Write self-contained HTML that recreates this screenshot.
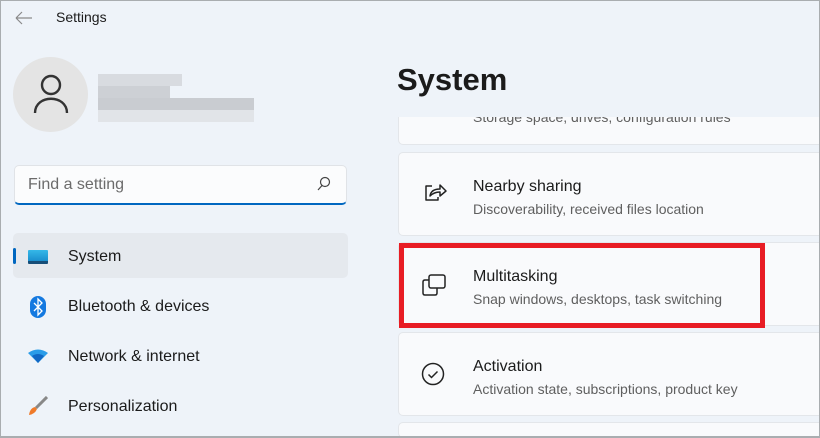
<!DOCTYPE html>
<html><head><style>
*{margin:0;padding:0;box-sizing:border-box}
html,body{width:820px;height:438px;overflow:hidden}
body{background:#eef3f9;font-family:"Liberation Sans",sans-serif;color:#1b1b1b;position:relative}
.frame{position:absolute;left:0;top:0;width:820px;height:438px;border:1px solid #a9adb0;border-bottom-width:2px;pointer-events:none;z-index:10}
.abs{position:absolute}
.card{position:absolute;left:398px;width:430px;height:84px;background:#f9fafc;border:1px solid #e3e6ea;border-radius:5px}
.t{position:absolute;left:74px;top:25px;font-size:16px;color:#1b1b1b}
.s{position:absolute;left:74px;top:48px;font-size:14px;color:#5f5f5f}
.nav{position:absolute;left:68px;font-size:16px;color:#1b1b1b}
</style></head><body>
<div class="frame"></div>
<svg class="abs" style="left:14px;top:10px" width="20" height="16"><path d="M2 8H18M2 8L8 2M2 8L8 14" stroke="#8a8a8a" stroke-width="1.2" fill="none"/></svg>
<div class="abs" style="left:56px;top:9px;font-size:14px">Settings</div>
<div class="abs" style="left:13px;top:57px;width:75px;height:75px;border-radius:50%;background:#e4e4e4"></div>
<svg class="abs" style="left:33px;top:74px" width="36" height="40"><circle cx="18" cy="11" r="9" stroke="#333" stroke-width="2.4" fill="none"/><path d="M2 39 C2 20 34 20 34 39" stroke="#333" stroke-width="2.4" fill="none"/></svg>
<div class="abs" style="left:98px;top:74px;width:84px;height:12px;background:#d8dbe0"></div>
<div class="abs" style="left:98px;top:86px;width:72px;height:12px;background:#cdd0d5"></div>
<div class="abs" style="left:98px;top:98px;width:156px;height:12px;background:#c9ccd1"></div>
<div class="abs" style="left:98px;top:110px;width:156px;height:12px;background:#e1e4e8"></div>
<div class="abs" style="left:14px;top:165px;width:333px;height:40px;background:#fbfcfd;border:1px solid #e0e3e7;border-bottom:2px solid #0067c0;border-radius:5px"></div>
<div class="abs" style="left:28px;top:176px;font-size:16px;color:#6b6b6b">Find a setting</div>
<svg class="abs" style="left:316px;top:176px" width="16" height="16"><circle cx="9" cy="6" r="4.5" stroke="#444" stroke-width="1.2" fill="none"/><path d="M6 9.5L2 14" stroke="#444" stroke-width="1.2"/></svg>
<div class="abs" style="left:13px;top:233px;width:335px;height:45px;background:#e5e9ee;border-radius:5px"></div>
<div class="abs" style="left:13px;top:248px;width:3px;height:16px;background:#0067c0;border-radius:2px"></div>
<div class="abs" style="left:28px;top:250px;width:20px;height:14px;background:linear-gradient(#35b8e8,#1a8fce);border-radius:1px;border-bottom:3px solid #174e78"></div>
<div class="nav" style="top:248px">System</div>
<svg class="abs" style="left:30px;top:296px" width="16" height="22"><rect x="0" y="0" width="16" height="22" rx="8" fill="#1479e0"/><path d="M4 7L12 15L8 19V3L12 7L4 15" stroke="#fff" stroke-width="1.3" fill="none"/></svg>
<div class="nav" style="top:298px">Bluetooth &amp; devices</div>
<svg class="abs" style="left:28px;top:349px" width="20" height="14"><path d="M0 4Q10 -3 20 4L10 14Z" fill="#2a9ce8"/><path d="M4 7Q10 3 16 7L10 14Z" fill="#1168c4"/></svg>
<div class="nav" style="top:348px">Network &amp; internet</div>
<svg class="abs" style="left:28px;top:396px" width="20" height="20"><path d="M19 1L8 12" stroke="#888" stroke-width="3"/><path d="M7 11Q2 12 1 19Q7 18 9 13Z" fill="#ef7a2a"/></svg>
<div class="nav" style="top:398px">Personalization</div>

<div class="card" style="top:61px"><div class="s" style="top:47px">Storage space, drives, configuration rules</div></div>
<div class="abs" style="left:390px;top:0;width:429px;height:117px;background:#eef3f9"></div>
<div class="abs" style="left:397px;top:62px;font-size:31px;font-weight:bold;color:#1b1b1b">System</div>
<div class="card" style="top:152px"><svg class="abs" style="left:24px;top:28px" width="26" height="26"><path d="M9 5H3V19H15V16" stroke="#222" stroke-width="1.5" fill="none" stroke-linejoin="round"/><path d="M7 15Q8 8 17 8V4L23 10L17 15V11Q11 11 7 15Z" stroke="#222" stroke-width="1.5" fill="none" stroke-linejoin="round"/></svg><div class="t">Nearby sharing</div><div class="s">Discoverability, received files location</div></div>
<div class="card" style="top:242px"><svg class="abs" style="left:22px;top:30px" width="28" height="24"><rect x="8" y="2" width="16" height="13" rx="2" stroke="#222" stroke-width="1.5" fill="none"/><path d="M8 7H4Q2 7 2 9V20Q2 22 4 22H14Q16 22 16 20V15" stroke="#222" stroke-width="1.5" fill="none"/></svg><div class="t">Multitasking</div><div class="s">Snap windows, desktops, task switching</div></div>
<div class="card" style="top:332px"><svg class="abs" style="left:22px;top:29px" width="26" height="26"><circle cx="12" cy="12" r="10.5" stroke="#222" stroke-width="1.5" fill="none"/><path d="M7.5 12.5L10.5 15.5L16.5 9.5" stroke="#222" stroke-width="1.5" fill="none"/></svg><div class="t">Activation</div><div class="s">Activation state, subscriptions, product key</div></div>
<div class="card" style="top:422px;height:16px"></div>
<div class="abs" style="left:399px;top:243px;width:366px;height:85px;border:5px solid #e81c24"></div>
</body></html>
